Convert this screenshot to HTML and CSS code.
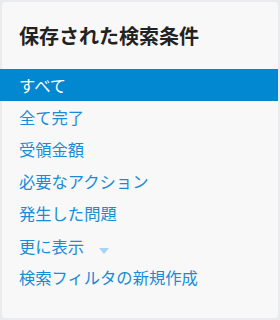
FILE: index.html
```html
<!DOCTYPE html>
<html lang="ja">

<head>
    <meta charset="UTF-8">
    <meta name="viewport" content="width=device-width, initial-scale=1.0">
    <title>保存された検索条件</title>
    <link rel="stylesheet" href="styles.css">
</head>

<body>
    <div class="panel" aria-labelledby="saved-title">
        <h2 id="saved-title" class="panel-title">保存された検索条件</h2>
        <ul class="filter-list">
            <li><a href="#" class="filter-item active">すべて</a></li>
            <li><a href="#" class="filter-item">全て完了</a></li>
            <li><a href="#" class="filter-item">受領金額</a></li>
            <li><a href="#" class="filter-item">必要なアクション</a></li>
            <li><a href="#" class="filter-item">発生した問題</a></li>
            <li>
                <a href="#" class="filter-item more">更に表示 <span class="caret"></span></a>
            </li>
            <li><a href="#" class="filter-item last">検索フィルタの新規作成</a></li>
        </ul>
    </div>
</body>

</html>
```

FILE: styles.css
```css
:root {
    --page-bg: #e9ebee;
    --panel-bg: #f8f8f8;
    --title-color: #222;
    --link-color: #1a8bd5;
    --active-bg: #0288d1;
    --caret-color: #a8d4ef;
    --font-family: "Noto Sans CJK JP", "Noto Sans", sans-serif;
}

* {
    box-sizing: border-box;
}

body {
    margin: 0;
    padding: 2px 2px;
    background-color: var(--page-bg);
    font-family: var(--font-family);
}

.panel {
    background-color: var(--panel-bg);
    border-radius: 4px;
    height: 316px;
    padding-top: 22px;
}

.panel-title {
    margin: 0 0 21px;
    padding-left: 17px;
    font-size: 20px;
    line-height: 24px;
    font-weight: bold;
    color: var(--title-color);
}

.filter-list {
    list-style: none;
    margin: 0;
    padding: 0;
}

.filter-item {
    display: flex;
    align-items: center;
    height: 32px;
    padding-left: 17px;
    font-size: 16.3px;
    color: var(--link-color);
    text-decoration: none;
}

.filter-item.active {
    background-color: var(--active-bg);
    color: #fff;
    margin-left: -2px;
    padding-left: 19px;
}

.filter-item.more {
    height: 34px;
}

.filter-item.last {
    height: 28px;
}

.caret {
    width: 0;
    height: 0;
    margin-left: 15px;
    margin-top: 9px;
    border-left: 5px solid transparent;
    border-right: 5px solid transparent;
    border-top: 6px solid var(--caret-color);
}
```
